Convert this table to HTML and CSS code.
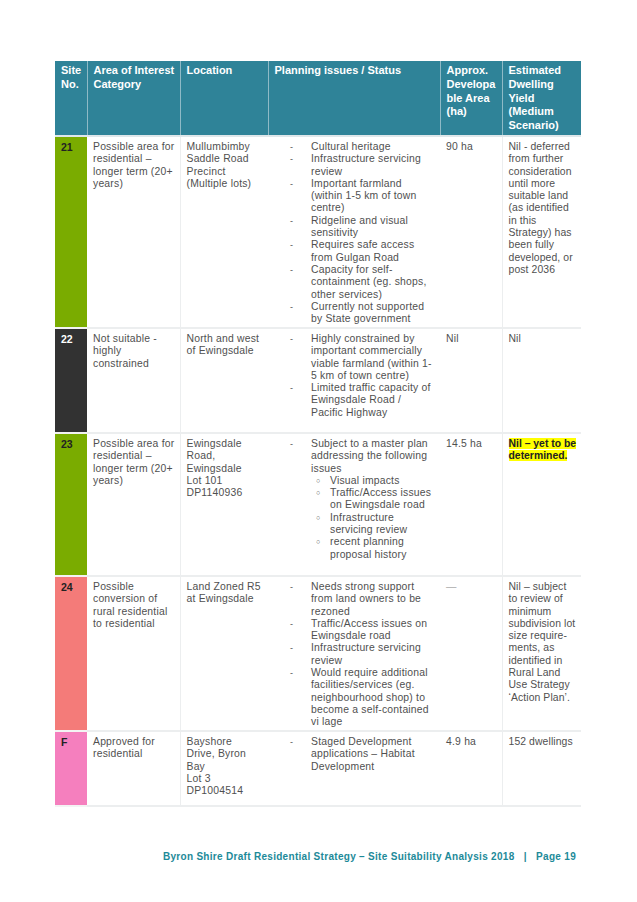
FILE: index.html
```html
<!DOCTYPE html>
<html>
<head>
<meta charset="utf-8">
<link rel="stylesheet" href="styles.css">
</head>
<body>
<div class="page">
<table class="sites">
  <colgroup>
    <col class="c-site"><col class="c-area"><col class="c-loc"><col class="c-plan"><col class="c-dev"><col class="c-yield">
  </colgroup>
  <thead>
    <tr>
      <th>Site No.</th>
      <th>Area of Interest Category</th>
      <th>Location</th>
      <th>Planning issues / Status</th>
      <th>Approx. Developa ble Area (ha)</th>
      <th>Estimated Dwelling Yield (Medium Scenario)</th>
    </tr>
  </thead>
  <tbody>
    <tr class="r21">
      <td class="site green">21</td>
      <td>Possible area for residential – longer term (20+ years)</td>
      <td class="loc">Mullumbimby Saddle Road Precinct (Multiple lots)</td>
      <td class="plan"><ul>
        <li>Cultural heritage</li>
        <li>Infrastructure servicing review</li>
        <li>Important farmland (within 1-5 km of town centre)</li>
        <li>Ridgeline and visual sensitivity</li>
        <li>Requires safe access from Gulgan Road</li>
        <li>Capacity for self-containment (eg. shops, other services)</li>
        <li>Currently not supported by State government</li>
      </ul></td>
      <td>90 ha</td>
      <td class="yield">Nil - deferred from further consideration until more suitable land (as identified in this Strategy) has been fully developed, or post 2036</td>
    </tr>
    <tr class="r22">
      <td class="site dark">22</td>
      <td>Not suitable - highly constrained</td>
      <td class="loc">North and west of Ewingsdale</td>
      <td class="plan"><ul>
        <li>Highly constrained by important commercially viable farmland (within 1-5 km of town centre)</li>
        <li>Limited traffic capacity of Ewingsdale Road / Pacific Highway</li>
      </ul></td>
      <td>Nil</td>
      <td class="yield">Nil</td>
    </tr>
    <tr class="r23">
      <td class="site green">23</td>
      <td>Possible area for residential – longer term (20+ years)</td>
      <td class="loc">Ewingsdale<br>Road,<br>Ewingsdale<br>Lot 101<br>DP1140936</td>
      <td class="plan"><ul>
        <li>Subject to a master plan addressing the following issues
          <ul class="sub">
            <li>Visual impacts</li>
            <li>Traffic/Access issues on Ewingsdale road</li>
            <li>Infrastructure servicing review</li>
            <li>recent planning proposal history</li>
          </ul>
        </li>
      </ul></td>
      <td>14.5 ha</td>
      <td class="yield"><span class="hl">Nil – yet to be determined.</span></td>
    </tr>
    <tr class="r24">
      <td class="site salmon">24</td>
      <td>Possible conversion of rural residential to residential</td>
      <td class="loc">Land Zoned R5 at Ewingsdale</td>
      <td class="plan"><ul>
        <li>Needs strong support from land owners to be rezoned</li>
        <li>Traffic/Access issues on Ewingsdale road</li>
        <li>Infrastructure servicing review</li>
        <li>Would require additional facilities/services (eg. neighbourhood shop) to become a self-contained vi lage</li>
      </ul></td>
      <td class="dash">—</td>
      <td class="yield">Nil – subject to review of minimum subdivision lot size require-ments, as identified in Rural Land Use Strategy ‘Action Plan’.</td>
    </tr>
    <tr class="rF">
      <td class="site pink">F</td>
      <td>Approved for residential</td>
      <td class="loc">Bayshore<br>Drive, Byron<br>Bay<br>Lot 3<br>DP1004514</td>
      <td class="plan"><ul>
        <li>Staged Development applications – Habitat Development</li>
      </ul></td>
      <td>4.9 ha</td>
      <td class="yield">152 dwellings</td>
    </tr>
  </tbody>
</table>
<p class="footer">Byron Shire Draft Residential Strategy – Site Suitability Analysis 2018 &nbsp;&nbsp;| &nbsp;&nbsp;Page 19</p>
</div>
</body>
</html>
```

FILE: styles.css
```css
html, body {
  margin: 0;
  padding: 0;
  background: #ffffff;
}
.page {
  width: 637px;
  height: 902px;
  padding: 61px 0 0 55px;
  box-sizing: border-box;
  font-family: "Liberation Sans", Arial, sans-serif;
}
.sites {
  width: 526px;
  border-collapse: collapse;
  table-layout: fixed;
}
.c-site { width: 32px; }
.c-area { width: 93px; }
.c-loc { width: 88px; }
.c-plan { width: 172px; }
.c-dev { width: 62px; }
.c-yield { width: 79px; }

.sites th {
  background: #2f8398;
  color: #ffffff;
  font-weight: bold;
  font-size: 11px;
  line-height: 13.8px;
  text-align: left;
  vertical-align: top;
  padding: 3px 3px 2px 6px;
  height: 67px;
  border-right: 1.5px solid #8fbac6;
  border-bottom: 2px solid #dfe7ea;
}
.sites th:last-child { border-right: none; }

.sites td {
  vertical-align: top;
  font-size: 10.4px;
  line-height: 12.29px;
  color: #505050;
  letter-spacing: 0.2px;
  padding: 4px 1px 0 6px;
  border-bottom: 2px solid #eceeef;
}
.sites td:nth-child(2) { border-right: 1px solid #eceeef; }
.sites td:nth-child(5) { border-right: 1px solid #eceeef; }
.sites td.loc { padding-right: 4px; }
.sites td.yield { letter-spacing: 0.1px; padding-right: 4px; }

.sites td.site {
  font-weight: bold;
  color: #222222;
  font-size: 10.5px;
  letter-spacing: 0;
  border-bottom: 2px solid #f3f3f3;
}
.green { background: #7aac00; }
.dark { background: #323232; color: #ffffff !important; }
.salmon { background: #f47b79; }
.pink { background: #f57fbe; }

.r21 td { height: 186px; }
.r22 td { height: 99px; }
.r23 td { height: 137px; }
.r24 td { height: 149px; }
.rF td { height: 69px; }

.sites td.plan { padding-left: 0; padding-right: 8px; }
.plan ul {
  list-style: none;
  margin: 0;
  padding: 0 0 0 43px;
}
.plan li {
  position: relative;
}
.plan > ul > li::before {
  content: "-";
  position: absolute;
  left: -21px;
  top: 0;
  font-size: 9px;
}
.plan ul.sub {
  padding-left: 19px;
}
.plan ul.sub li::before {
  content: "○";
  position: absolute;
  left: -14px;
  top: 0;
  font-size: 7px;
}
.dash { color: #aaaaaa !important; }
.hl {
  background: #ffff00;
  color: #222222;
  font-weight: bold;
  letter-spacing: 0;
}
.footer {
  margin: 44px 0 0 0;
  width: 521px;
  text-align: right;
  color: #1d8a99;
  font-weight: bold;
  font-size: 10px;
  letter-spacing: 0.3px;
}
```
